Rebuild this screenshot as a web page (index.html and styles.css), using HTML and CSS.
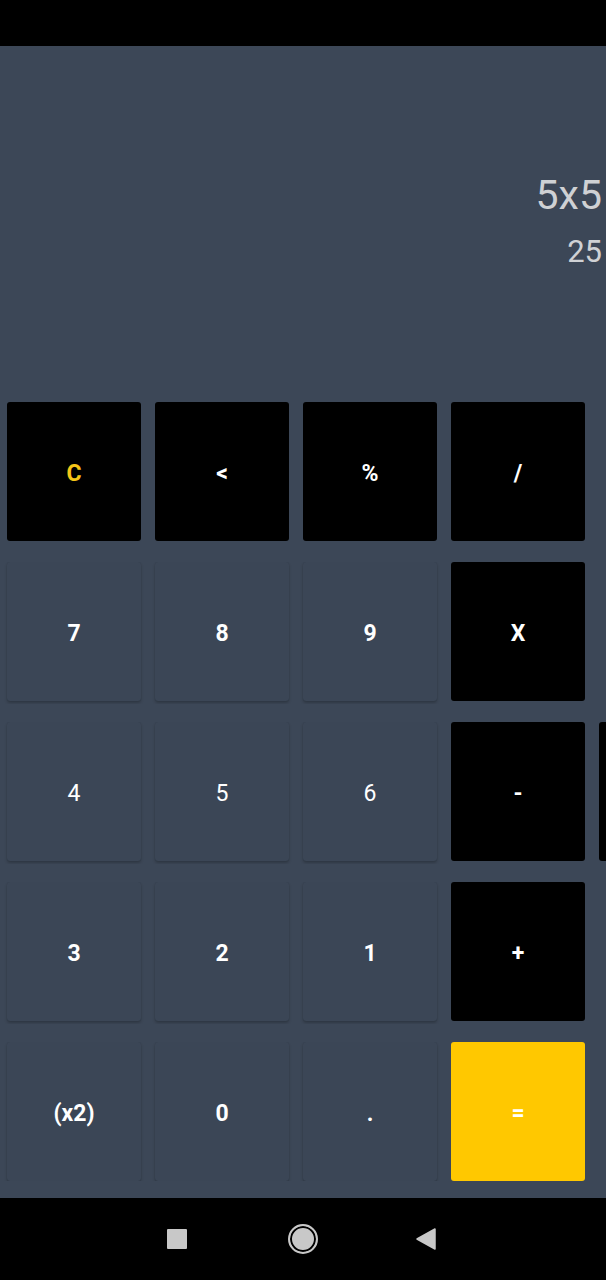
FILE: index.html
```html
<!DOCTYPE html>
<html lang="en">
<head>
<meta charset="utf-8">
<title>Calculator</title>
<link rel="stylesheet" href="styles.css">
</head>
<body>
<div class="status"></div>
<main class="app">
  <section class="display">
    <div class="expr">5x5</div>
    <div class="result">25</div>
  </section>
  <section class="keys">
    <div class="row">
      <button class="key op clear">C</button>
      <button class="key op">&lt;</button>
      <button class="key op">%</button>
      <button class="key op">/</button>
    </div>
    <div class="row">
      <button class="key num">7</button>
      <button class="key num">8</button>
      <button class="key num">9</button>
      <button class="key op">X</button>
    </div>
    <div class="row">
      <button class="key num light">4</button>
      <button class="key num light">5</button>
      <button class="key num light">6</button>
      <button class="key op">-</button>
      <button class="key op"></button>
    </div>
    <div class="row">
      <button class="key num">3</button>
      <button class="key num">2</button>
      <button class="key num">1</button>
      <button class="key op">+</button>
    </div>
    <div class="row">
      <button class="key num">(x2)</button>
      <button class="key num">0</button>
      <button class="key num">.</button>
      <button class="key eq">=</button>
    </div>
  </section>
</main>
<nav class="navbar">
  <span class="nav-square"></span>
  <span class="nav-home"></span>
  <svg class="nav-back" width="20" height="22" viewBox="0 0 20 22"><path d="M19 1 L19 21 L1 11 Z" fill="#c8c8c8" stroke="#c8c8c8" stroke-width="1.5" stroke-linejoin="round"/></svg>
</nav>
</body>
</html>
```
FILE: styles.css
```css
* { box-sizing: border-box; }
html, body {
  margin: 0;
  padding: 0;
  width: 606px;
  height: 1280px;
  overflow: hidden;
  background: #3c4757;
  font-family: Roboto, "Liberation Sans", sans-serif;
}
.status {
  height: 46px;
  background: #000;
}
.app {
  height: 1152px;
  background: #3c4757;
}
.display {
  height: 356px;
  padding-top: 125px;
  padding-right: 4px;
  text-align: right;
  color: #cfd1d4;
}
.expr {
  font-size: 41px;
  line-height: 48px;
}
.result {
  margin-top: 15px;
  font-size: 31px;
  line-height: 36px;
}
.keys {
  display: flex;
  flex-direction: column;
  gap: 21px;
  overflow: hidden;
}
.row {
  display: flex;
  gap: 14px;
  padding-left: 7px;
  width: 606px;
  overflow: hidden;
  padding-bottom: 3px;
  margin-bottom: -3px;
}
.key {
  flex: 0 0 134px;
  height: 139px;
  border: none;
  border-radius: 3px;
  font-family: Roboto, "Liberation Sans", sans-serif;
  font-size: 23px;
  font-weight: 700;
  color: #fff;
  padding: 3px 0 0;
}
.op {
  background: #000;
}
.clear {
  color: #f5c518;
}
.num {
  background: #3b4656;
  box-shadow: 0 2px 3px rgba(0,0,0,0.22), 0 0 1px rgba(0,0,0,0.15);
}
.light {
  font-weight: 400;
}
.eq {
  background: #ffc800;
}
.navbar {
  height: 82px;
  background: #000;
  display: flex;
  align-items: center;
  padding-left: 167px;
}
.nav-square {
  width: 20px;
  height: 20px;
  background: #c8c8c8;
  border-radius: 1px;
}
.nav-home {
  margin-left: 101px;
  width: 30px;
  height: 30px;
  border-radius: 50%;
  border: 2px solid #c8c8c8;
  background: #c8c8c8;
  box-shadow: inset 0 0 0 2px #000;
}
.nav-back {
  margin-left: 98px;
}
```
